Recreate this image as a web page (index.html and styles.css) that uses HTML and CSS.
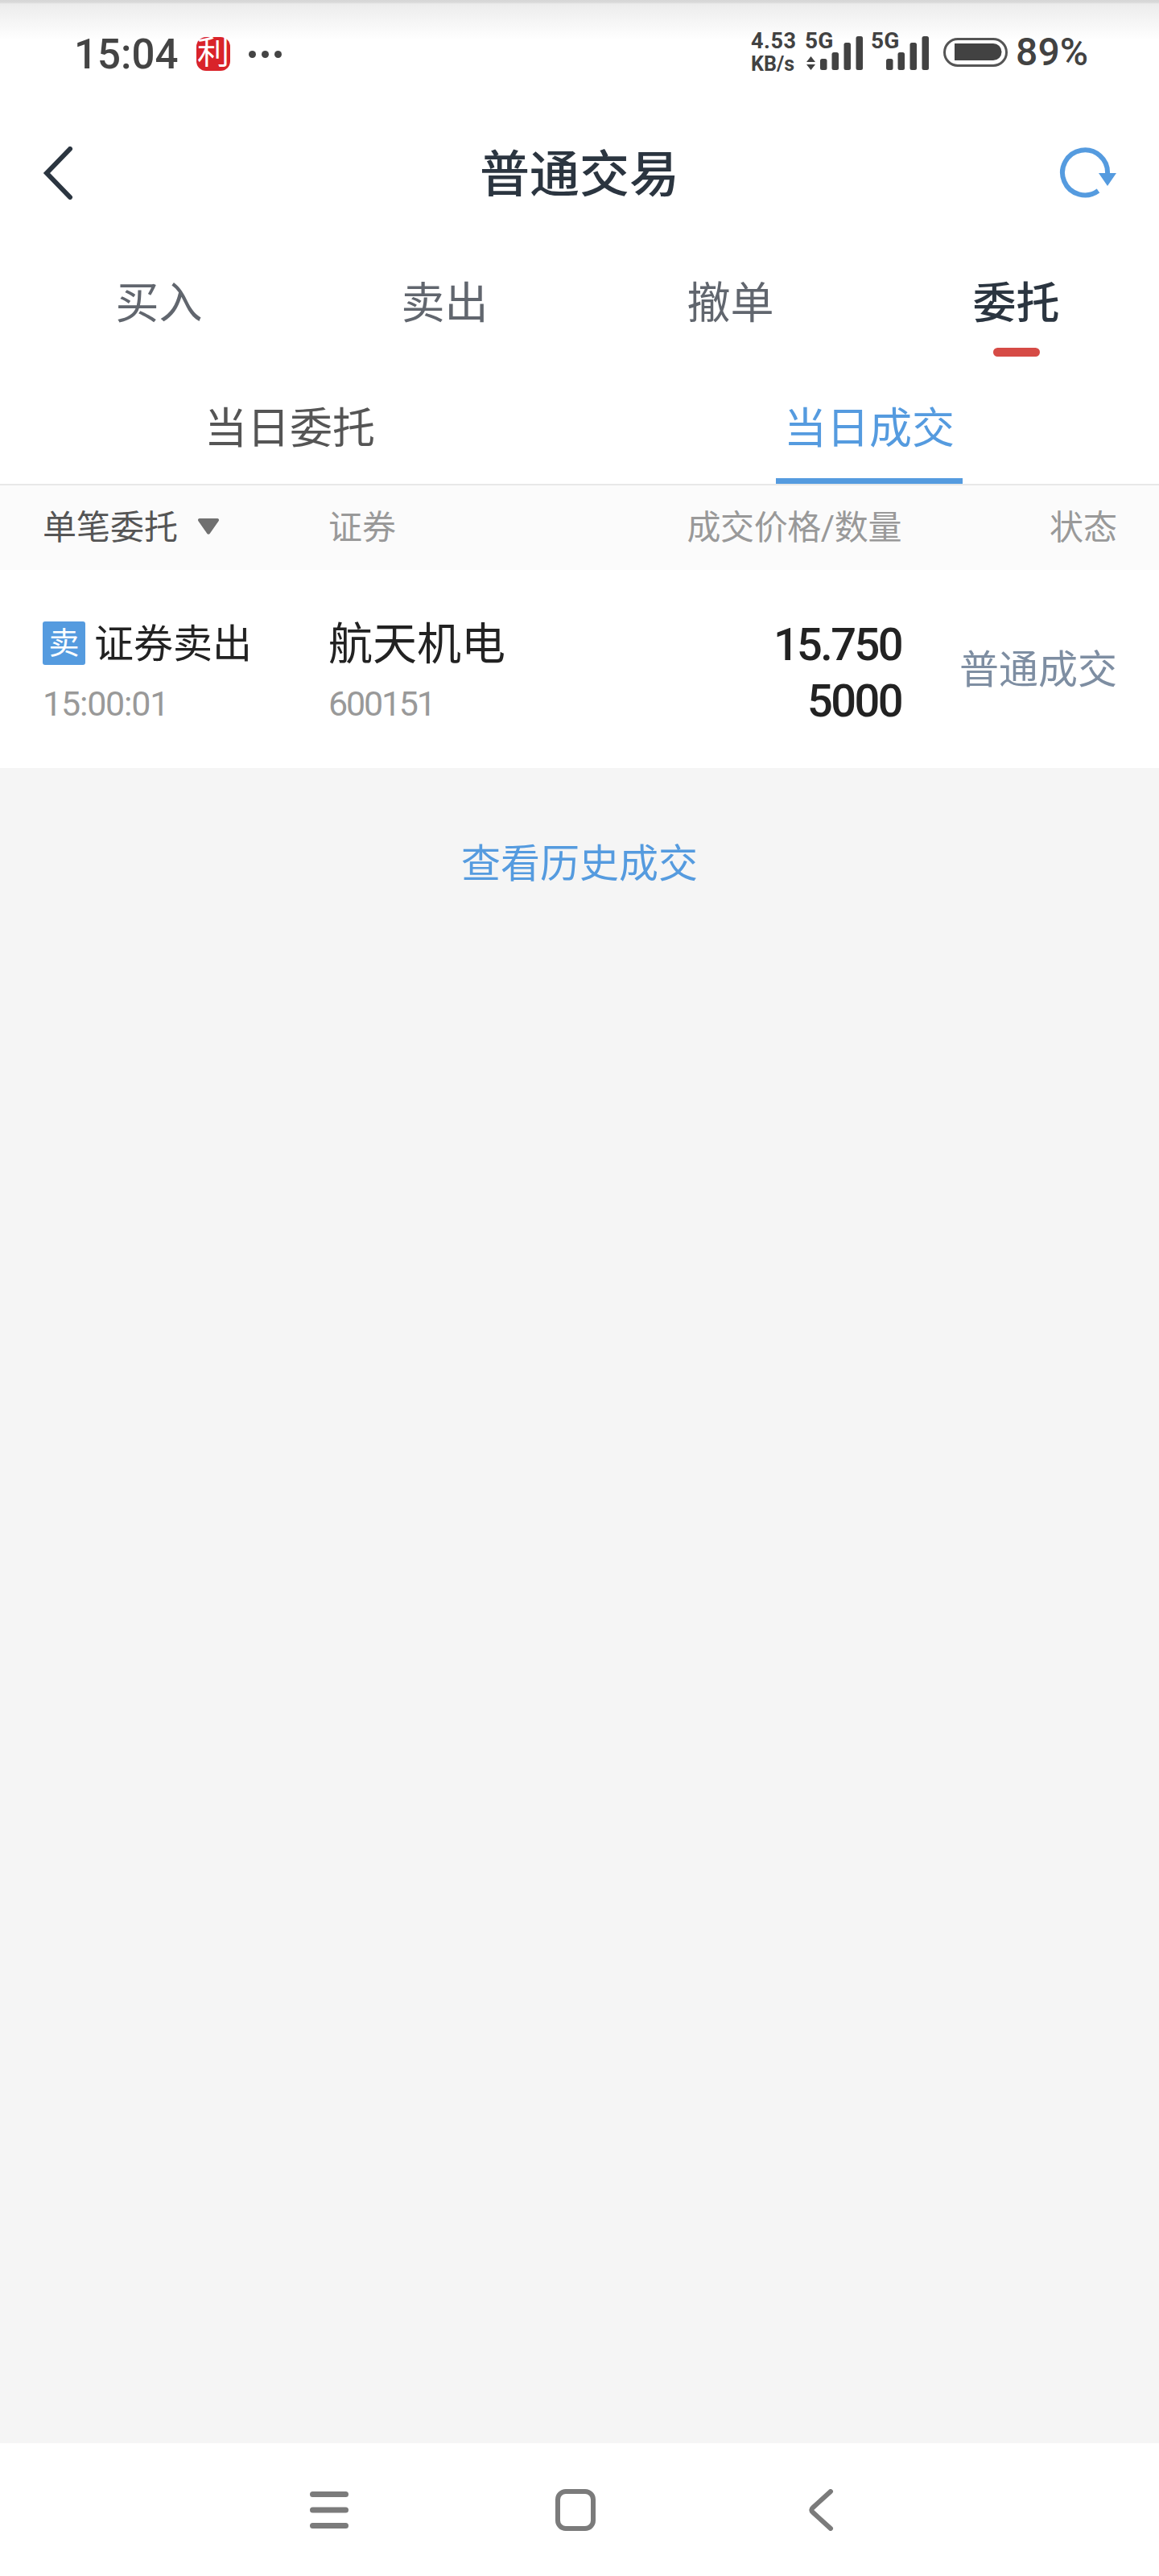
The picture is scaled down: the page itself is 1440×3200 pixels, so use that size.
FILE: index.html
```html
<!DOCTYPE html>
<html lang="zh-CN">
<head>
  <meta charset="UTF-8">
  <meta name="viewport" content="width=device-width, initial-scale=1.0">
  <title>普通交易</title>
  <link rel="stylesheet" href="styles.css">
</head>
<body>
  <div class="status-bar">
    <div class="status-left">
      <span class="time">15:04</span>
      <span class="seal">利</span>
      <span class="dots"><i></i><i></i><i></i></span>
    </div>
    <div class="status-right">
      <div class="net-speed">
        <span class="speed">4.53</span>
        <span class="unit">KB/s</span>
      </div>
      <div class="signal">
        <span class="signal-label">5G</span>
        <svg width="72" height="44" viewBox="0 0 72 44" fill="#424242">
          <polygon points="7.5,27 13,34 2,34"/>
          <polygon points="2,37 13,37 7.5,44"/>
          <rect x="19" y="30" width="8.5" height="14" rx="2.5"/>
          <rect x="33.5" y="22" width="8.5" height="22" rx="2.5"/>
          <rect x="48.5" y="10" width="8.5" height="34" rx="2.5"/>
          <rect x="63.5" y="2" width="8.5" height="42" rx="2.5"/>
        </svg>
      </div>
      <div class="signal">
        <span class="signal-label">5G</span>
        <svg width="72" height="44" viewBox="0 0 72 44" fill="#424242">
          <rect x="19" y="30" width="8.5" height="14" rx="2.5"/>
          <rect x="33.5" y="22" width="8.5" height="22" rx="2.5"/>
          <rect x="48.5" y="10" width="8.5" height="34" rx="2.5"/>
          <rect x="63.5" y="2" width="8.5" height="42" rx="2.5"/>
        </svg>
      </div>
      <svg class="battery" width="80" height="36" viewBox="0 0 80 36">
        <rect x="1.5" y="1.5" width="77" height="33" rx="16.5" fill="#fff" stroke="#555" stroke-width="3"/>
        <path d="M14 7H62a10.500 10.500 0 0 1 0 21H14z" fill="#424242"/>
      </svg>
      <span class="battery-text">89%</span>
    </div>
  </div>

  <div class="nav-bar">
    <svg class="nav-back" width="38" height="66" viewBox="0 0 38 66" fill="none" stroke="#2b3540" stroke-width="6">
      <path d="M34 3 5 33 34 63" stroke-linecap="round"/>
    </svg>
    <div class="nav-title">普通交易</div>
    <svg class="nav-refresh" width="72" height="70" viewBox="0 0 72 70" fill="none">
      <path d="M61 36A28 28 0 1 0 49.500 57" stroke="#559bdf" stroke-width="6"/>
      <polygon points="50,35 72,35 61,51" fill="#559bdf"/>
    </svg>
  </div>

  <div class="tabs">
    <div class="tab">买入</div>
    <div class="tab">卖出</div>
    <div class="tab">撤单</div>
    <div class="tab active">委托</div>
  </div>

  <div class="sub-tabs">
    <div class="sub-tab"><span>当日委托</span></div>
    <div class="sub-tab active"><span>当日成交</span></div>
  </div>

  <div class="table-head cols">
    <div class="head-filter">单笔委托
      <svg width="28" height="22" viewBox="0 0 28 22"><path d="M3 1H25a2 2 0 0 1 1.600 3.200L15.600 20a2 2 0 0 1-3.200 0L1.400 4.200A2 2 0 0 1 3 1z" fill="#707070"/></svg>
    </div>
    <div>证券</div>
    <div class="num head-price">成交价格/数量</div>
    <div class="num">状态</div>
  </div>

  <div class="main">
    <div class="row cols">
      <div>
        <div class="kind"><span class="badge">卖</span><span class="kind-text">证券卖出</span></div>
        <div class="sub-num sub-time">15:00:01</div>
      </div>
      <div>
        <div class="stock-name">航天机电</div>
        <div class="sub-num">600151</div>
      </div>
      <div class="num price">15.750<br>5000</div>
      <div class="num state">普通成交</div>
    </div>
    <div class="history">查看历史成交</div>
  </div>

  <div class="bottom-nav">
    <svg width="60" height="52" viewBox="0 0 60 52" stroke="#7b7b7b" stroke-width="7" stroke-linecap="round">
      <path d="M9.500 6.500H50.500M9.500 26H50.500M9.500 45.500H50.500"/>
    </svg>
    <svg width="60" height="52" viewBox="0 0 60 52" fill="none" stroke="#7b7b7b" stroke-width="6">
      <rect x="8" y="3" width="44" height="46" rx="10"/>
    </svg>
    <svg width="60" height="52" viewBox="0 0 60 52" fill="none" stroke="#7b7b7b" stroke-width="6" stroke-linecap="round" stroke-linejoin="round">
      <path d="M41 3 19 23Q15.500 26 19 29L41 49"/>
    </svg>
  </div>
</body>
</html>
```

FILE: styles.css
```css
* {
  box-sizing: border-box;
}
body {
  font-family: Roboto, "Noto Sans CJK SC", sans-serif;
  margin: 0;
  width: 1440px;
  height: 3200px;
  display: flex;
  flex-direction: column;
  background: #fff;
}

/* status bar */
.status-bar {
  height: 134px;
  padding: 0 88px 0 92px;
  display: flex;
  justify-content: space-between;
  align-items: center;
  background: linear-gradient(#d6d6d6 0, #d9d9d9 3px, #ececec 5px, #fbfbfb 40px, #fff 50px);
}
.status-left {
  display: flex;
  align-items: center;
}
.time {
  font-size: 51px;
  font-weight: 500;
  color: #444;
  width: 152px;
}
.seal {
  width: 42px;
  height: 42px;
  border-radius: 12px;
  background: #d9232a;
  color: #fff;
  font-size: 40px;
  line-height: 40px;
  text-align: center;
}
.dots {
  display: flex;
  gap: 7px;
  margin-left: 23px;
}
.dots i {
  width: 9px;
  height: 9px;
  border-radius: 50%;
  background: #444;
}
.status-right {
  display: flex;
  align-items: center;
  margin-bottom: 4px;
  color: #424242;
}
.net-speed {
  display: flex;
  flex-direction: column;
  gap: 5px;
  font-weight: 700;
  width: 57px;
  margin-right: 10px;
}
.speed {
  font-size: 27px;
  line-height: 24px;
  letter-spacing: 0.5px;
}
.unit {
  font-size: 25px;
  line-height: 24px;
}
.signal {
  position: relative;
  width: 72px;
  height: 44px;
  margin-right: 10px;
}
.signal svg {
  display: block;
}
.signal-label {
  position: absolute;
  left: 0;
  top: -4px;
  font-size: 28px;
  line-height: 24px;
  font-weight: 700;
}
.battery {
  margin: 0 10px 0 8px;
}
.battery-text {
  font-size: 48px;
  line-height: 48px;
  font-weight: 500;
}

/* nav */
.nav-bar {
  height: 162px;
  padding: 0 53px;
  display: grid;
  grid-template-columns: 1fr auto 1fr;
  align-items: center;
}
.nav-title {
  font-size: 62px;
  font-weight: 500;
  color: #2b3540;
  margin-bottom: 6px;
}
.nav-refresh {
  justify-self: end;
}

/* top tabs */
.tabs {
  padding: 52px 0 17px 20px;
  display: grid;
  grid-template-columns: repeat(4, 1fr);
  text-align: center;
}
.tab {
  font-size: 54px;
  line-height: 60px;
  color: #61666e;
}
.tab::after {
  content: "";
  display: block;
  width: 58px;
  height: 11px;
  margin: 24px auto 0;
  border-radius: 6px;
}
.tab.active {
  color: #2b3540;
  font-weight: 500;
}
.tab.active::after {
  background: #d64b46;
}

/* sub tabs */
.sub-tabs {
  display: grid;
  grid-template-columns: 1fr 1fr;
  text-align: center;
  padding-top: 43px;
  border-bottom: 2px solid #e8e8e8;
}
.sub-tab span {
  display: inline-block;
  padding: 0 10px 31px;
  font-size: 53px;
  line-height: 60px;
  color: #555;
  border-bottom: 7px solid transparent;
  vertical-align: top;
}
.sub-tab.active span {
  color: #559bdf;
  border-bottom-color: #559bdf;
}

/* table */
.cols {
  display: grid;
  grid-template-columns: 355px 390px 322px 268px;
  padding: 0 52px 0 53px;
}
.table-head {
  height: 105px;
  align-items: center;
  background: #fbfbfb;
  font-size: 42px;
  line-height: 48px;
  color: #999;
}
.head-price {
  letter-spacing: -0.4px;
}
.head-filter {
  display: flex;
  align-items: center;
  gap: 24px;
  color: #555;
}
.head-filter svg {
  margin-top: -4px;
}
.num {
  text-align: right;
}
.main {
  flex: 1;
  background: #f5f5f5;
}
.row {
  height: 246px;
  padding-top: 64px;
  background: #fff;
}
.kind {
  display: flex;
  align-items: center;
  height: 54px;
  font-size: 49px;
  color: #222;
}
.kind-text {
  margin-bottom: 8px;
}
.badge {
  width: 53px;
  height: 54px;
  margin-right: 11px;
  border-radius: 3px;
  background: #559bdf;
  color: #fff;
  font-size: 38px;
  line-height: 54px;
  text-align: center;
}
.stock-name {
  height: 54px;
  font-size: 55px;
  line-height: 56px;
  color: #222;
}
.sub-num {
  margin-top: 26px;
  font-size: 43px;
  line-height: 44px;
  letter-spacing: -2.200px;
  color: #999;
}
.sub-time {
  letter-spacing: -1.200px;
}
.price {
  margin-top: -6px;
  font-size: 56px;
  line-height: 70px;
  font-weight: 500;
  letter-spacing: -2.600px;
  color: #222;
}
.state {
  margin-top: 31px;
  font-size: 49px;
  line-height: 60px;
  color: #7e8ea2;
}
.history {
  margin-top: 90px;
  text-align: center;
  font-size: 49px;
  line-height: 60px;
  color: #559bdf;
}

/* system nav */
.bottom-nav {
  height: 165px;
  padding-right: 10px;
  display: flex;
  justify-content: center;
  align-items: center;
  gap: 246px;
  background: #fff;
}
```
